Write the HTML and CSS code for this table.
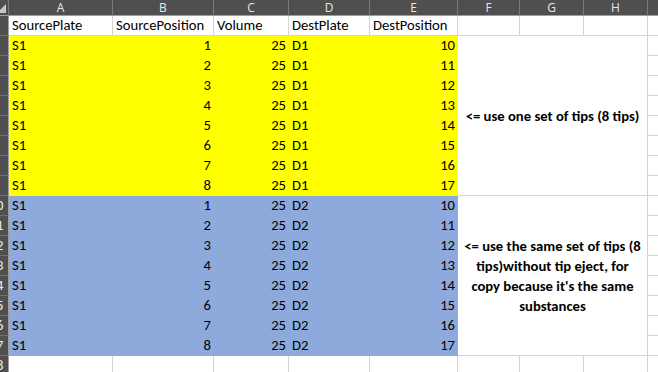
FILE: index.html
```html
<!DOCTYPE html>
<html>
<head>
<meta charset="utf-8">
<link rel="stylesheet" href="styles.css">
</head>
<body>
<div class="sheet">
  <div class="hd corner"><span class="tri"></span></div>
  <div class="hd">A</div><div class="hd">B</div><div class="hd">C</div><div class="hd">D</div><div class="hd">E</div><div class="hd">F</div><div class="hd">G</div><div class="hd">H</div><div class="hd"></div>

  <div class="rh"><span>1</span></div>
  <div class="c">SourcePlate</div><div class="c">SourcePosition</div><div class="c">Volume</div><div class="c">DestPlate</div><div class="c">DestPosition</div><div class="c"></div><div class="c"></div><div class="c"></div><div class="c"></div>

  <div class="note n1"><span>&lt;= use one set of tips (8 tips)</span></div>
  <div class="note n2"><span>&lt;= use the same set of tips (8 tips)without tip eject, for copy because it's the same substances</span></div>

  <div class="rh"><span>2</span></div><div class="c y">S1</div><div class="c y r">1</div><div class="c y r">25</div><div class="c y">D1</div><div class="c y r">10</div><div class="c"></div>
  <div class="rh"><span>3</span></div><div class="c y">S1</div><div class="c y r">2</div><div class="c y r">25</div><div class="c y">D1</div><div class="c y r">11</div><div class="c"></div>
  <div class="rh"><span>4</span></div><div class="c y">S1</div><div class="c y r">3</div><div class="c y r">25</div><div class="c y">D1</div><div class="c y r">12</div><div class="c"></div>
  <div class="rh"><span>5</span></div><div class="c y">S1</div><div class="c y r">4</div><div class="c y r">25</div><div class="c y">D1</div><div class="c y r">13</div><div class="c"></div>
  <div class="rh"><span>6</span></div><div class="c y">S1</div><div class="c y r">5</div><div class="c y r">25</div><div class="c y">D1</div><div class="c y r">14</div><div class="c"></div>
  <div class="rh"><span>7</span></div><div class="c y">S1</div><div class="c y r">6</div><div class="c y r">25</div><div class="c y">D1</div><div class="c y r">15</div><div class="c"></div>
  <div class="rh"><span>8</span></div><div class="c y">S1</div><div class="c y r">7</div><div class="c y r">25</div><div class="c y">D1</div><div class="c y r">16</div><div class="c"></div>
  <div class="rh"><span>9</span></div><div class="c y">S1</div><div class="c y r">8</div><div class="c y r">25</div><div class="c y">D1</div><div class="c y r">17</div><div class="c"></div>

  <div class="rh"><span>10</span></div><div class="c b">S1</div><div class="c b r">1</div><div class="c b r">25</div><div class="c b">D2</div><div class="c b r">10</div><div class="c"></div>
  <div class="rh"><span>11</span></div><div class="c b">S1</div><div class="c b r">2</div><div class="c b r">25</div><div class="c b">D2</div><div class="c b r">11</div><div class="c"></div>
  <div class="rh"><span>12</span></div><div class="c b">S1</div><div class="c b r">3</div><div class="c b r">25</div><div class="c b">D2</div><div class="c b r">12</div><div class="c"></div>
  <div class="rh"><span>13</span></div><div class="c b">S1</div><div class="c b r">4</div><div class="c b r">25</div><div class="c b">D2</div><div class="c b r">13</div><div class="c"></div>
  <div class="rh"><span>14</span></div><div class="c b">S1</div><div class="c b r">5</div><div class="c b r">25</div><div class="c b">D2</div><div class="c b r">14</div><div class="c"></div>
  <div class="rh"><span>15</span></div><div class="c b">S1</div><div class="c b r">6</div><div class="c b r">25</div><div class="c b">D2</div><div class="c b r">15</div><div class="c"></div>
  <div class="rh"><span>16</span></div><div class="c b">S1</div><div class="c b r">7</div><div class="c b r">25</div><div class="c b">D2</div><div class="c b r">16</div><div class="c"></div>
  <div class="rh"><span>17</span></div><div class="c b">S1</div><div class="c b r">8</div><div class="c b r">25</div><div class="c b">D2</div><div class="c b r">17</div><div class="c"></div>

  <div class="rh"><span>18</span></div><div class="c"></div><div class="c"></div><div class="c"></div><div class="c"></div><div class="c"></div><div class="c"></div><div class="c"></div><div class="c"></div><div class="c"></div>
</div>
</body>
</html>
```

FILE: styles.css
```css
html, body {
  margin: 0;
  padding: 0;
  background: #ffffff;
  overflow: hidden;
}

.sheet {
  display: grid;
  grid-template-columns: 9px 104px 101px 75px 81px 88px 62px 64px 64px 40px;
  grid-template-rows: 16px repeat(18, 20px);
  width: 688px;
  font-family: Carlito, Calibri, Lato, "Liberation Sans", sans-serif;
  font-size: 14.67px;
  color: #000000;
}

.hd {
  box-sizing: border-box;
  background: #4f4f4f;
  color: #e6e6e6;
  border-right: 1px solid #7a7a7a;
  border-bottom: 1px solid #9e9e9e;
  font-family: "Open Sans", "DejaVu Sans", sans-serif;
  font-size: 12px;
  line-height: 15px;
  text-align: center;
}

.corner {
  position: relative;
  overflow: hidden;
}

.tri {
  position: absolute;
  right: 2px;
  bottom: 2px;
  width: 0;
  height: 0;
  border-left: 9px solid transparent;
  border-bottom: 9px solid #c8c8c8;
}

.rh {
  box-sizing: border-box;
  background: #4f4f4f;
  color: #ececec;
  border-right: 1px solid #9e9e9e;
  border-bottom: 1px solid #6e6e6e;
  overflow: hidden;
  white-space: nowrap;
  font-size: 14.67px;
  line-height: 19px;
}

.rh span {
  display: block;
  width: 32px;
  margin-left: -20px;
  text-align: center;
}

.c {
  box-sizing: border-box;
  border-right: 1px solid #d4d4d4;
  border-bottom: 1px solid #d4d4d4;
  padding: 0 2px 2px 3px;
  display: flex;
  align-items: flex-end;
  white-space: nowrap;
  overflow: hidden;
  line-height: 16px;
}

.r {
  justify-content: flex-end;
}

.y {
  background: #ffff00;
  border-color: #ffff00;
}

.b {
  background: #8ea9db;
  border-color: #8ea9db;
}

.note {
  box-sizing: border-box;
  grid-column: 7 / 10;
  border-right: 1px solid #d4d4d4;
  border-bottom: 1px solid #d4d4d4;
  display: flex;
  align-items: center;
  justify-content: center;
  text-align: center;
  font-weight: bold;
  line-height: 20px;
  padding: 0 6px;
}

.n1 {
  grid-row: 3 / 11;
}

.n2 {
  grid-row: 11 / 19;
}
```
